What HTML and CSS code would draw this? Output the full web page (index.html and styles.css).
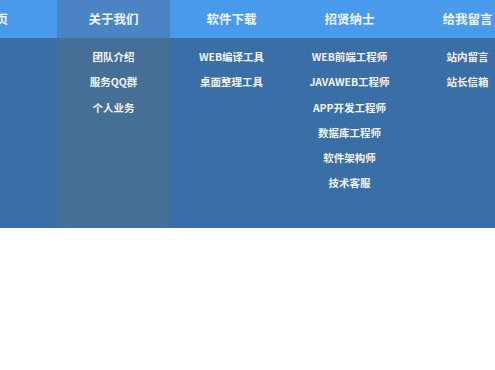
FILE: index.html
```html
<!DOCTYPE html>
<html lang="zh">
<head>
<meta charset="utf-8">
<title>导航</title>
<link rel="stylesheet" href="styles.css">
</head>
<body>
<nav class="nav">
  <div class="col">
    <div class="head">首页</div>
    <ul class="sub"></ul>
  </div>
  <div class="col active">
    <div class="head">关于我们</div>
    <ul class="sub">
      <li>团队介绍</li>
      <li>服务QQ群</li>
      <li>个人业务</li>
    </ul>
  </div>
  <div class="col">
    <div class="head">软件下载</div>
    <ul class="sub">
      <li>WEB编译工具</li>
      <li>桌面整理工具</li>
    </ul>
  </div>
  <div class="col">
    <div class="head">招贤纳士</div>
    <ul class="sub">
      <li>WEB前端工程师</li>
      <li>JAVAWEB工程师</li>
      <li>APP开发工程师</li>
      <li>数据库工程师</li>
      <li>软件架构师</li>
      <li>技术客服</li>
    </ul>
  </div>
  <div class="col">
    <div class="head">给我留言</div>
    <ul class="sub">
      <li>站内留言</li>
      <li>站长信箱</li>
    </ul>
  </div>
</nav>
</body>
</html>
```
FILE: styles.css
```css
html, body {
  margin: 0;
  padding: 0;
  background: #ffffff;
  overflow: hidden;
}
body {
  font-family: "Noto Sans CJK SC", "Liberation Sans", sans-serif;
  color: #f2f4f7;
}
.nav {
  display: grid;
  grid-template-columns: repeat(5, 113px);
  column-gap: 5px;
  margin-left: -61px;
  width: 620px;
  height: 228px;
  background: linear-gradient(to bottom, #4a9aec 0, #4a9aec 38px, #3a6ea7 38px, #3a6ea7 228px);
}
.col {
  display: flex;
  flex-direction: column;
}
.head {
  height: 38px;
  line-height: 38px;
  text-align: center;
  font-size: 12.5px;
  font-weight: bold;
}
.sub {
  list-style: none;
  margin: 0;
  padding: 6px 0 0;
  flex: 1;
}
.sub li {
  line-height: 25.3px;
  text-align: center;
  font-size: 10.5px;
  font-weight: bold;
}
.active .head {
  background: #4b84c4;
}
.active .sub {
  background: #466f98;
}
```
